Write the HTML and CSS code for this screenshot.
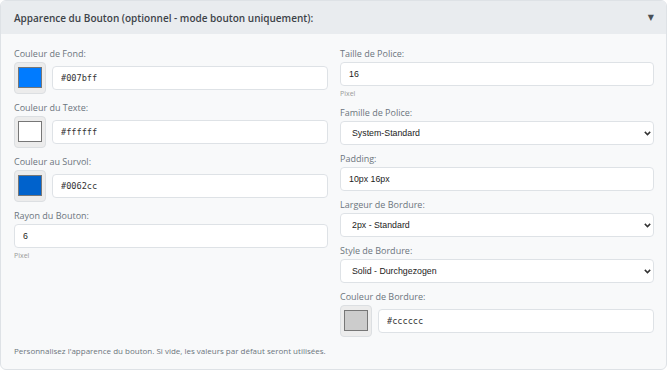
FILE: index.html
```html
<!DOCTYPE html>
<html lang="fr">
<head>
  <meta charset="UTF-8">
  <meta name="viewport" content="width=device-width, initial-scale=1.0">
  <title>Apparence du Bouton</title>
  <link rel="stylesheet" href="styles.css">
</head>
<body>
  <div class="panel">
    <div class="panel-header">
      <span class="panel-title">Apparence du Bouton (optionnel - mode bouton uniquement):</span>
      <span class="caret">&#9660;</span>
    </div>

    <div class="panel-body">
      <div class="grid">
        <div class="col">
          <div class="field">
            <label>Couleur de Fond:</label>
            <div class="color-row">
              <div class="swatch"><div class="chip" style="background:#007bff"></div></div>
              <input class="input mono" type="text" value="#007bff">
            </div>
          </div>
          <div class="field">
            <label>Couleur du Texte:</label>
            <div class="color-row">
              <div class="swatch"><div class="chip" style="background:#ffffff"></div></div>
              <input class="input mono" type="text" value="#ffffff">
            </div>
          </div>
          <div class="field">
            <label>Couleur au Survol:</label>
            <div class="color-row">
              <div class="swatch"><div class="chip" style="background:#0062cc"></div></div>
              <input class="input mono" type="text" value="#0062cc">
            </div>
          </div>
          <div class="field">
            <label>Rayon du Bouton:</label>
            <input class="input" type="text" value="6">
            <small class="unit">Pixel</small>
          </div>
        </div>

        <div class="col">
          <div class="field">
            <label>Taille de Police:</label>
            <input class="input" type="text" value="16">
            <small class="unit">Pixel</small>
          </div>
          <div class="field">
            <label>Famille de Police:</label>
            <div class="select-wrap">
              <select class="input">
                <option>System-Standard</option>
              </select>
              <svg class="chevron" width="7" height="5" viewBox="0 0 7 5"><path d="M0.8 0.9 L3.5 3.6 L6.2 0.9" fill="none" stroke="#333" stroke-width="1.5"/></svg>
            </div>
          </div>
          <div class="field">
            <label>Padding:</label>
            <input class="input" type="text" value="10px 16px">
          </div>
          <div class="field">
            <label>Largeur de Bordure:</label>
            <div class="select-wrap">
              <select class="input">
                <option>2px - Standard</option>
              </select>
              <svg class="chevron" width="7" height="5" viewBox="0 0 7 5"><path d="M0.8 0.9 L3.5 3.6 L6.2 0.9" fill="none" stroke="#333" stroke-width="1.5"/></svg>
            </div>
          </div>
          <div class="field">
            <label>Style de Bordure:</label>
            <div class="select-wrap">
              <select class="input">
                <option>Solid - Durchgezogen</option>
              </select>
              <svg class="chevron" width="7" height="5" viewBox="0 0 7 5"><path d="M0.8 0.9 L3.5 3.6 L6.2 0.9" fill="none" stroke="#333" stroke-width="1.5"/></svg>
            </div>
          </div>
          <div class="field">
            <label>Couleur de Bordure:</label>
            <div class="color-row">
              <div class="swatch"><div class="chip" style="background:#cccccc"></div></div>
              <input class="input mono" type="text" value="#cccccc">
            </div>
          </div>
        </div>
      </div>

      <p class="hint">Personnalisez l'apparence du bouton. Si vide, les valeurs par défaut seront utilisées.</p>
    </div>
  </div>
</body>
</html>
```

FILE: styles.css
```css
* {
  margin: 0;
  padding: 0;
  box-sizing: border-box;
}

body {
  background: #fff;
  font-family: 'Open Sans', sans-serif;
  color: #333;
}

.panel {
  width: 667px;
  border: 1px solid #dee2e6;
  border-radius: 6px;
  background: #f8f9fa;
  overflow: hidden;
}

.panel-header {
  height: 33px;
  background: #e9ecef;
  display: flex;
  align-items: center;
  justify-content: space-between;
  padding: 0 12px 0 13px;
}

.panel-title {
  font-size: 10px;
  font-weight: 600;
  color: #3d4349;
}

.caret {
  font-family: 'DejaVu Sans', sans-serif;
  font-size: 8px;
  color: #495057;
}

.panel-body {
  padding: 13px 12px 11px 13px;
}

.grid {
  display: grid;
  grid-template-columns: 1fr 1fr;
  gap: 12px;
}

.field {
  margin-bottom: 7px;
}

.field label {
  display: block;
  font-size: 9px;
  line-height: 13px;
  color: #6c757d;
  margin-bottom: 2px;
}

.input {
  display: block;
  width: 100%;
  height: 24px;
  border: 1px solid #dee2e6;
  border-radius: 4px;
  background: #fff;
  padding: 0 8px;
  font-family: 'Liberation Sans', Arial, sans-serif;
  font-size: 8.8px;
  color: #222;
  outline: none;
}

.select-wrap {
  position: relative;
}

select.input {
  appearance: none;
  -webkit-appearance: none;
  padding: 0 20px 0 11px;
}

.chevron {
  position: absolute;
  right: 3px;
  top: 10px;
  pointer-events: none;
}

.mono {
  font-family: 'DejaVu Sans Mono', monospace;
  font-size: 8.6px;
  color: #333;
}

.unit {
  display: block;
  font-size: 7px;
  line-height: 11px;
  margin-top: 2px;
  color: #999;
}

.color-row {
  display: flex;
  align-items: center;
  gap: 6px;
}

.swatch {
  flex: 0 0 32px;
  height: 32px;
  border: 1px solid #dcdfe2;
  border-radius: 4px;
  background: #ececec;
  padding: 4px 3px 5px;
}

.chip {
  height: 100%;
  border: 1px solid #777;
}

.color-row .input {
  flex: 1;
}

.hint {
  font-size: 8px;
  line-height: 14px;
  color: #6c757d;
}
```
